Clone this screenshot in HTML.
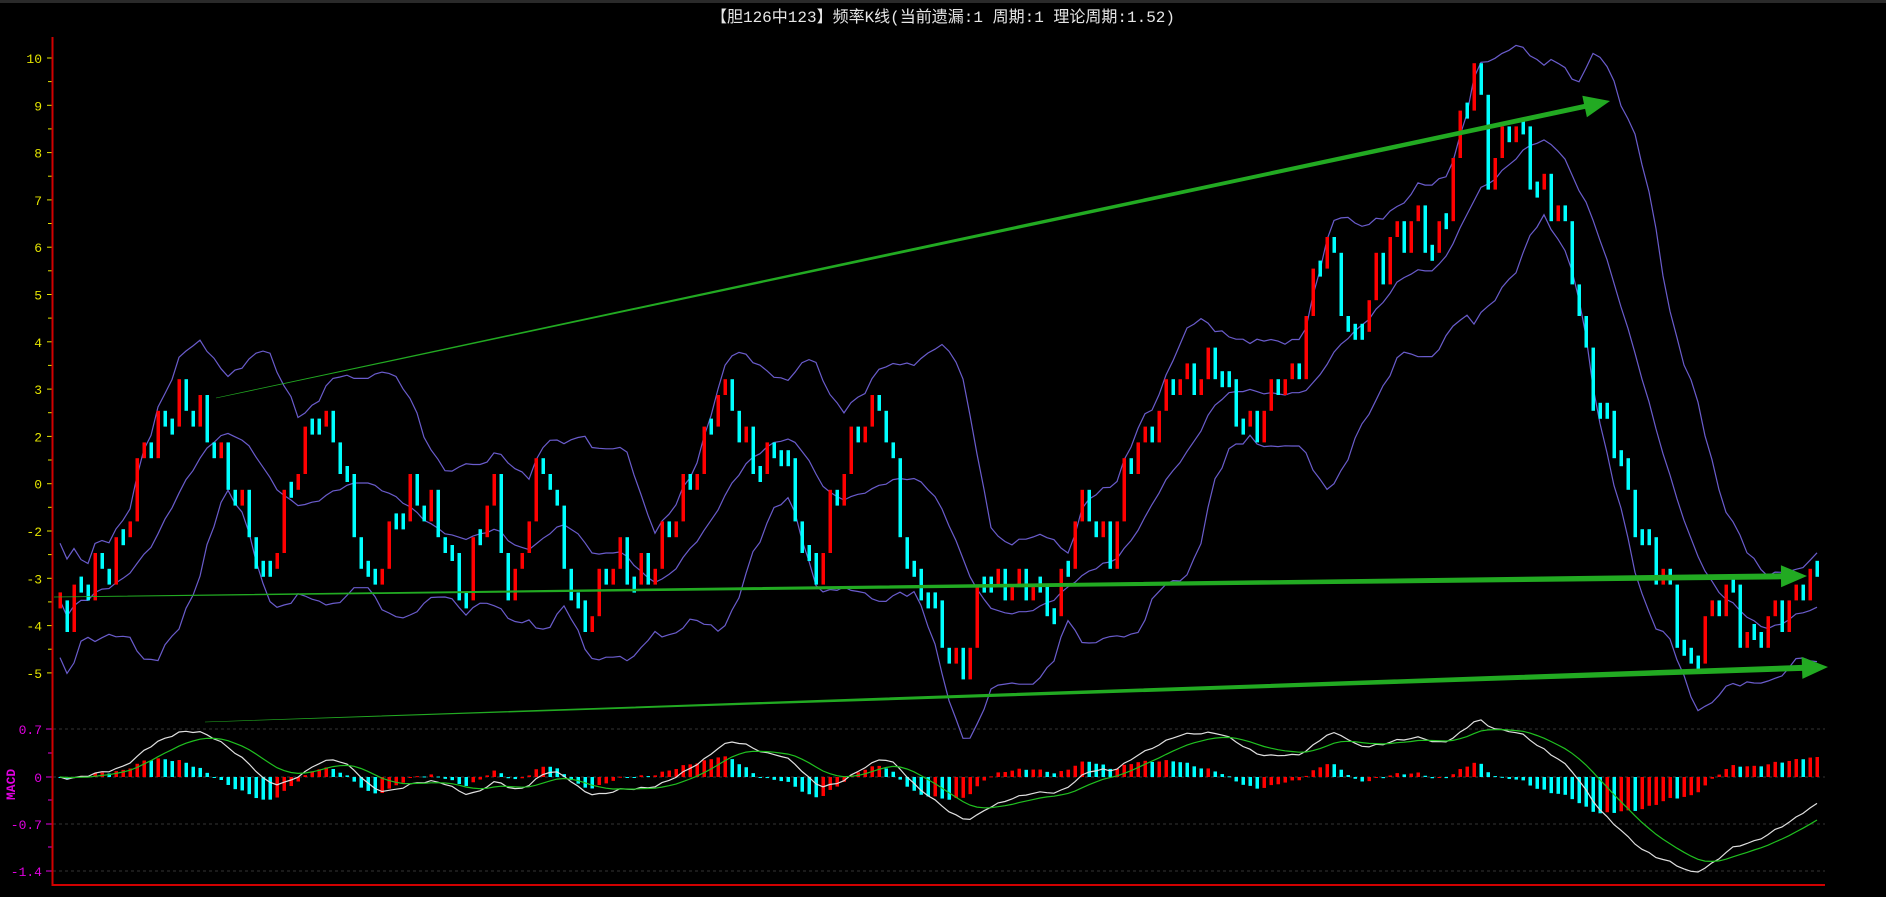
<!DOCTYPE html>
<html><head><meta charset="utf-8"><style>
html,body{margin:0;padding:0;background:#000;width:1886px;height:897px;overflow:hidden}
svg{display:block}
text{font-family:"Liberation Mono","Noto Sans CJK SC",monospace}
</style></head><body>
<svg id="s" width="1886" height="897" xmlns="http://www.w3.org/2000/svg">
<rect x="0" y="0" width="1886" height="3" fill="#2a2a2a"/>
<text x="943" y="22" fill="#e6e6e6" font-size="16" text-anchor="middle" font-family="'Liberation Sans','Noto Sans CJK SC',sans-serif">【胆126中123】频率K线(当前遗漏:1 周期:1 理论周期:1.52)</text>
<g id="g"></g>
</svg>
<script>
(function(){
var NS="http://www.w3.org/2000/svg",g=document.getElementById('g');
function el(t,a,txt){var e=document.createElementNS(NS,t);for(var k in a)e.setAttribute(k,a[k]);if(txt!=null)e.textContent=txt;g.appendChild(e);return e;}
var labs=["10","9","8","7","6","5","4","3","2","0","-2","-3","-4","-5"];
for(var k=0;k<labs.length;k++){var y=58+47.3*k;
 el('text',{x:42,y:y+5,fill:'#e4e400','font-size':13,'text-anchor':'end'},labs[k]);
 el('line',{x1:47,y1:y,x2:52,y2:y,stroke:'#e4e400','stroke-width':1});
 if(k<13)el('line',{x1:48,y1:y+23.6,x2:52,y2:y+23.6,stroke:'#e4e400','stroke-width':1});}
var ml=[["0.7",729],["0",777],["-0.7",824],["-1.4",871]];
ml.forEach(function(m){el('text',{x:42,y:m[1]+5,fill:'#e000e0','font-size':13,'text-anchor':'end'},m[0]);
 el('line',{x1:46,y1:m[1],x2:52,y2:m[1],stroke:'#e000e0'});
 el('line',{x1:53,y1:m[1],x2:1825,y2:m[1],stroke:'#333','stroke-dasharray':'3,3'});});
el('line',{x1:48,y1:753,x2:52,y2:753,stroke:'#e000e0'});el('line',{x1:48,y1:800,x2:52,y2:800,stroke:'#e000e0'});el('line',{x1:48,y1:847,x2:52,y2:847,stroke:'#e000e0'});
el('text',{x:0,y:0,fill:'#e000e0','font-size':13,'font-weight':'bold',transform:'translate(15,800) rotate(-90)','font-family':'Liberation Serif,serif'},'MACD');
el('line',{x1:52.5,y1:37,x2:52.5,y2:886,stroke:'#d00000','stroke-width':2});
el('line',{x1:52,y1:885,x2:1825,y2:885,stroke:'#d00000','stroke-width':2});
var kp=[[50,505],[95,465],[120,380],[148,330],[180,370],[220,485],[265,330],[310,490],[345,400],[385,490],[410,410],[425,495],[455,380],[485,540],[510,455],[530,495],[555,440],[575,410],[597,315],[625,385],[650,380],[678,490],[710,360],[735,345],[760,480],[805,565],[820,480],[880,500],[905,410],[925,460],[945,370],[1000,300],[1045,355],[1080,300],[1105,195],[1130,290],[1160,190],[1195,205],[1230,50],[1240,130],[1260,110],[1300,180],[1330,330],[1370,450],[1410,555],[1440,480],[1460,545],[1480,510],[1515,480]];
kp=kp.map(function(p){return [p[0]*1.2,p[1]*1.2];});
function path(x){for(var i=0;i<kp.length-1;i++){if(x<=kp[i+1][0]){var a=kp[i],b=kp[i+1],f=(x-a[0])/(b[0]-a[0]);return a[1]+f*(b[1]-a[1]);}}return kp[kp.length-1][1];}
var N=252,X0=60,DX=7,cl=[],xs=[];
for(var i=0;i<N;i++){var x=X0+i*DX;xs.push(x);var y=path(x)+20*Math.sin(i*2.1)+10*Math.sin(i*0.9);y=Math.round(y/15.8)*15.8;cl.push(y);}
var P=14,up=[],md=[],lo=[];
for(var i=0;i<N;i++){var s=0,c=0;for(var j=Math.max(0,i-P+1);j<=i;j++){s+=cl[j];c++;}var m=s/c,v=0;for(var j=Math.max(0,i-P+1);j<=i;j++)v+=(cl[j]-m)*(cl[j]-m);var sd=Math.sqrt(v/c);if(c<4)sd=28;md.push(m);up.push(m-1.9*sd-4);lo.push(m+1.9*sd+4);}
function pl(arr,col,w){var d='';for(var i=0;i<arr.length;i++)d+=(i?'L':'M')+xs[i].toFixed(1)+' '+arr[i].toFixed(1);el('path',{d:d,fill:'none',stroke:col,'stroke-width':w||1.2});}
pl(up,'#6a5ccc');pl(md,'#6a5ccc');pl(lo,'#6a5ccc');
for(var i=0;i<N;i++){var o=i?cl[i-1]:cl[i]+12,c2=cl[i];var ty=Math.min(o,c2),h=Math.abs(o-c2);if(h<14){h=16;ty=c2-8;}
 el('rect',{x:xs[i]-1.5,y:ty,width:3.5,height:h,fill:(c2<o)?'#ff0000':'#00ffff'});}
function arrow(x1,y1,x2,y2,w1,w2,col){var dx=x2-x1,dy=y2-y1,L=Math.sqrt(dx*dx+dy*dy),ux=dx/L,uy=dy/L,nx=-uy,ny=ux;var hl=26,hw=11;var bx=x2-ux*hl,by=y2-uy*hl;
 var pts=[[x1+nx*w1/2,y1+ny*w1/2],[bx+nx*w2/2,by+ny*w2/2],[bx+nx*hw,by+ny*hw],[x2,y2],[bx-nx*hw,by-ny*hw],[bx-nx*w2/2,by-ny*w2/2],[x1-nx*w1/2,y1-ny*w1/2]];
 el('polygon',{points:pts.map(function(p){return p[0].toFixed(1)+','+p[1].toFixed(1)}).join(' '),fill:col});}
arrow(216,398,1610,101,0.6,5,'#22aa22');
arrow(54,597,1807,576,0.8,6,'#22aa22');
arrow(205,722,1828,667,0.4,6,'#22aa22');
var pr=cl.map(function(y){return -y;});
function ema(a,n){var k=2/(n+1),o=[a[0]];for(var i=1;i<a.length;i++)o.push(o[i-1]+k*(a[i]-o[i-1]));return o;}
var e1=ema(pr,12),e2=ema(pr,26),dif=e1.map(function(v,i){return v-e2[i];}),dea=ema(dif,9);
var mx=0;dif.forEach(function(v){mx=Math.max(mx,Math.abs(v));});var sc=95/mx;
for(var i=0;i<N;i++){var hv=(dif[i]-dea[i])*2*sc*0.6,pv=i?(dif[i-1]-dea[i-1])*2*sc*0.6:0;var y1=777-hv;
 el('rect',{x:xs[i]-1.5,y:Math.min(777,y1),width:3.5,height:Math.max(1,Math.abs(hv)),fill:(hv>pv)?'#ff0000':'#00ffff'});}
var dd='',de='';for(var i=0;i<N;i++){dd+=(i?'L':'M')+xs[i]+' '+(777-dif[i]*sc).toFixed(1);de+=(i?'L':'M')+xs[i]+' '+(777-dea[i]*sc).toFixed(1);}
el('path',{d:dd,fill:'none',stroke:'#e0e0e0','stroke-width':1.2});
el('path',{d:de,fill:'none',stroke:'#20c020','stroke-width':1.2});
})();
</script>
</body></html>
